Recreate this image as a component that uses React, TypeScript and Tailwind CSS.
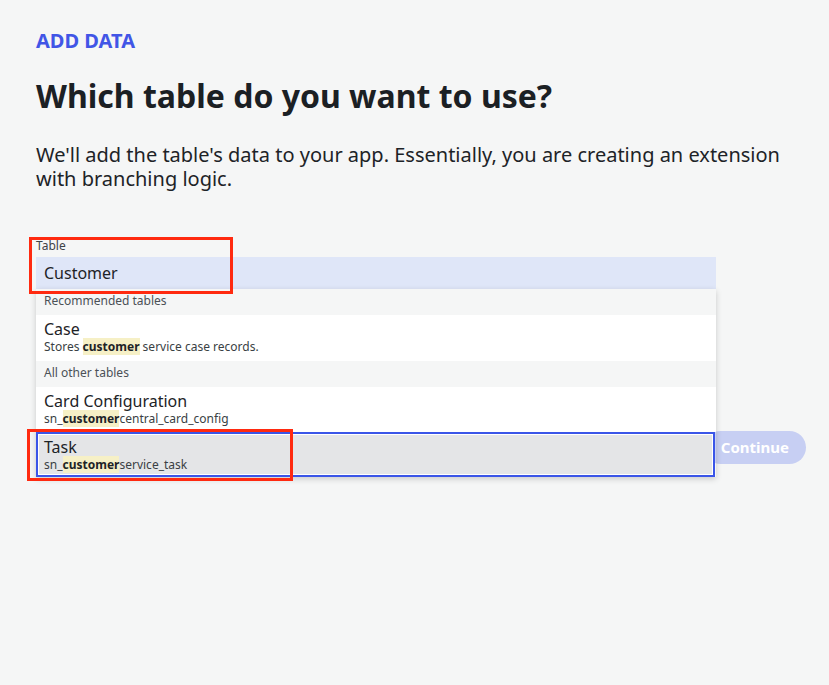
import React from "react";

const font = { fontFamily: '"Noto Sans", "Open Sans", sans-serif' };

type Item = { title: string; pre?: string; hit: string; post: string; active?: boolean; h?: string };

const Row = ({ item }: { item: Item }) => (
  <div
    className={
      item.active
        ? "h-[45px] bg-[#e4e5e7] border-2 border-[#3a55e8] shadow-[inset_0_0_0_1px_#ffffff] pl-[6px] pt-[4px] mr-[1px]"
        : `${item.h ?? "h-[46px]"} bg-white pl-[8px] pt-[5px]`
    }
  >
    <div className="text-[16px] leading-[19px] text-[#1d2327]">{item.title}</div>
    <div className="text-[12px] leading-[16px] text-[#3a3f44]">
      {item.pre}
      <span className="bg-[#f6f0c6] font-bold text-[#1d2327]">{item.hit}</span>
      {item.post}
    </div>
  </div>
);

const SectionHead = ({ label }: { label: string }) => (
  <div className="h-[26px] bg-[#f5f6f6] pl-[8px] pt-[4px] text-[12px] leading-[16px] text-[#4b5157]">{label}</div>
);

export default function App() {
  return (
    <div style={font} className="relative min-h-[685px] bg-[#f5f6f6] px-[36px] pt-[29px] text-[#1d2327]">
      <div className="text-[20px] leading-[24px] font-bold text-[#4155e6]">ADD DATA</div>
      <h1 className="mt-[23px] text-[32px] leading-[40px] font-bold text-[#1b2024]">Which table do you want to use?</h1>
      <p className="mt-[27px] w-[760px] text-[20px] leading-[24px] text-[#1d2327]">
        We'll add the table's data to your app. Essentially, you are creating an extension with branching logic.
      </p>

      <div className="mt-[47px] w-[770px]">
        <div className="text-[12px] leading-[16px] text-[#3d4247]">Table</div>
        <div className="relative mt-[3px] w-[680px]">
          <div className="h-[32px] bg-[#dfe6f8] pl-[8px] pt-[5px] text-[16px] leading-[22px] text-[#1d2327]">Customer</div>
          <div className="absolute left-0 top-full z-10 w-full shadow-[0_2px_6px_rgba(0,0,0,0.18)]">
            <SectionHead label="Recommended tables" />
            <Row item={{ title: "Case", pre: "Stores ", hit: "customer", post: " service case records." }} />
            <SectionHead label="All other tables" />
            <Row item={{ title: "Card Configuration", pre: "sn_", hit: "customer", post: "central_card_config", h: "h-[45px]" }} />
            <Row item={{ title: "Task", pre: "sn_", hit: "customer", post: "service_task", active: true }} />
          </div>
        </div>
        <div className="mt-[142px] flex justify-end">
          <button className="h-[33px] rounded-full bg-[#c7cff3] px-[17px] text-[15px] font-bold text-white">Continue</button>
        </div>
      </div>

      <div className="absolute left-[29px] top-[237px] h-[57px] w-[204px] border-[3px] border-[#ff2a10] z-20" />
      <div className="absolute left-[27px] top-[429px] h-[52px] w-[266px] border-[3px] border-[#ff2a10] z-20" />
    </div>
  );
}
